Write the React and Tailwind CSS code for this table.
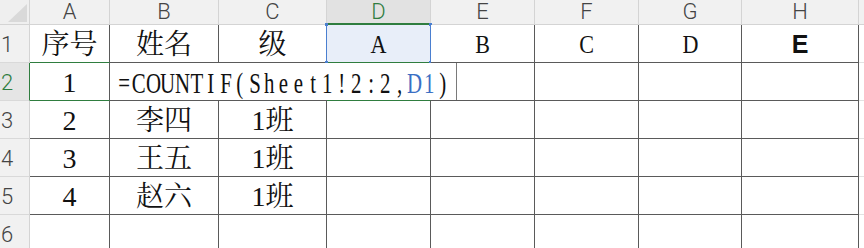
import React from "react";

const SERIF = { fontFamily: '"Liberation Serif","Noto Serif CJK SC","Noto Sans CJK SC",serif' };
const SANS = { fontFamily: 'Roboto,"Liberation Sans","Noto Sans CJK SC",sans-serif' };

const cols = ["A", "B", "C", "D", "E", "F", "G", "H"];
const data = [
  ["序号", "姓名", "级", "A", "B", "C", "D", "E"],
  ["1", "", "", "", "", "", "", ""],
  ["2", "李四", "1班", "", "", "", "", ""],
  ["3", "王五", "1班", "", "", "", "", ""],
  ["4", "赵六", "1班", "", "", "", "", ""],
  ["", "", "", "", "", "", "", ""],
];

function HeaderRow() {
  return (
    <>
      <div className="relative bg-[#efefef] border-r border-b border-[#d4d4d4]">
        <svg width="30" height="25" className="absolute left-0 top-0">
          <polygon points="8,22 27,4 27,22" fill="#d9d9d9" />
        </svg>
      </div>
      {cols.map((c) => {
        const sel = c === "D";
        return (
          <div
            key={c}
            style={SANS}
            className={
              "flex items-center justify-center font-light text-[22px] leading-none border-r " +
              (sel
                ? "bg-[#e2e2e2] text-[#2f7d3f] border-r-[#d4d4d4] border-b-2 border-b-[#2f7d3f]"
                : "bg-[#f1f1f1] text-[#444] border-b border-[#d4d4d4]")
            }
          >
            {c}
          </div>
        );
      })}
      <div className="bg-[#f1f1f1] border-b border-[#d4d4d4]" />
    </>
  );
}

function RowHeader({ n }) {
  const sel = n === 2;
  return (
    <div
      style={SANS}
      className={
        "flex items-center pl-[1px] pt-[3px] text-[22px] font-light leading-none border-b border-[#d9d9d9] border-r " +
        (sel ? "bg-[#e5e5e5] text-[#2f7d3f] border-r-[#2f7d3f]" : "bg-[#f1f1f1] text-[#444] border-r-[#d4d4d4]")
      }
    >
      <span>{n}</span>
    </div>
  );
}

function Corners() {
  return (
    <>
      <div className="absolute -left-[2px] -top-[2px] w-[3px] h-[3px] bg-[#4a7fd0]" />
      <div className="absolute -right-[2px] -top-[2px] w-[3px] h-[3px] bg-[#4a7fd0]" />
      <div className="absolute -left-[2px] -bottom-[2px] w-[3px] h-[3px] bg-[#4a7fd0]" />
      <div className="absolute -right-[2px] -bottom-[2px] w-[3px] h-[3px] bg-[#4a7fd0]" />
    </>
  );
}

function MonoText({ text, className = "" }) {
  return (
    <>
      {Array.from(text).map((ch, i) => (
        <span key={i} className={"inline-flex justify-center w-[14.5px] " + className}>
          <span className="inline-block scale-x-[0.72]">{ch}</span>
        </span>
      ))}
    </>
  );
}

export default function App() {
  return (
    <div className="w-[864px] h-[248px] overflow-hidden bg-white">
      <div className="grid grid-cols-[30px_80px_109px_108px_104px_104px_104px_103px_117px_1fr] grid-rows-[25px_38px_38px_38px_38px_38px_38px]">
        <HeaderRow />
        {data.map((row, ri) => {
          const r = ri + 1;
          return (
            <React.Fragment key={r}>
              <RowHeader n={r} />
              {row.map((v, ci) => {
                let cls =
                  "relative flex items-center justify-center border-r border-b border-[#5a5a5a] text-[#111] text-[28px] leading-none";
                let bg = "bg-white";
                if ((r === 1 || r === 2) && (ci === 0 || ci === 3)) cls += " border-b-[#2f7d3f]";
                if (r === 1 && (ci === 2 || ci === 3)) cls += " border-r-[#4a7fd0]";
                if (r === 1 && ci === 3) bg = "bg-[#e8eef9]";
                if (r === 6) cls += " border-b-transparent";
                const isE = r === 1 && ci === 7;
                const latin = r === 1 && ci >= 3 && ci < 7;
                return (
                  <div
                    key={ci}
                    className={cls + " " + bg}
                    style={isE ? { fontFamily: '"Liberation Sans",Arial,sans-serif' } : SERIF}
                  >
                    {isE ? (
                      <span className="font-bold text-[25px] pt-[2px]">E</span>
                    ) : (
                      <span className={"pt-[3px] " + (latin ? "text-[26px] inline-block scale-x-[0.85]" : "")}>{v}</span>
                    )}
                    {r === 1 && ci === 3 && <Corners />}
                    {r === 2 && ci === 1 && (
                      <div
                        style={SERIF}
                        className="absolute left-0 top-0 bottom-0 w-[347px] z-10 bg-white border-r border-[#7a7a7a] flex items-center pl-[7px] pt-[3px] text-[29px] whitespace-nowrap text-[#111]"
                      >
                        <MonoText text="=COUNTIF(Sheet1!2:2," />
                        <MonoText text="D1" className="text-[#3b6fc4]" />
                        <MonoText text=")" />
                      </div>
                    )}
                  </div>
                );
              })}
              <div className="border-b border-[#e2e2e2]" />
            </React.Fragment>
          );
        })}
      </div>
    </div>
  );
}
